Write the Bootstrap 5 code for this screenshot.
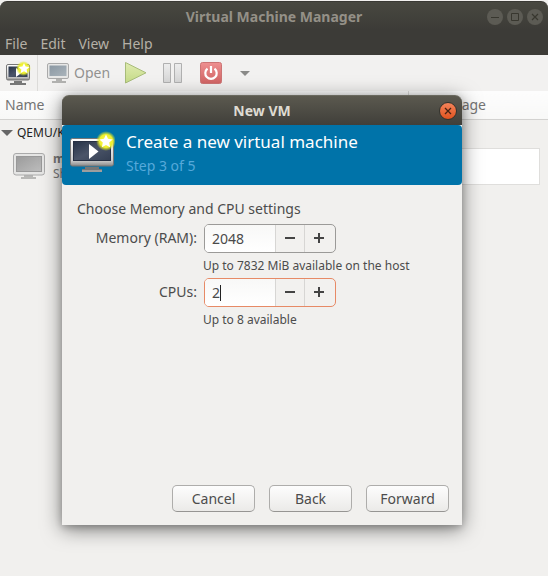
<!DOCTYPE html>
<html lang="en">
<head>
<meta charset="utf-8">
<meta name="viewport" content="width=device-width, initial-scale=1">
<title>Virtual Machine Manager</title>
<link href="https://cdn.jsdelivr.net/npm/bootstrap@5.3.0/dist/css/bootstrap.min.css" rel="stylesheet">
<style>
body{font-family:"Noto Sans","Open Sans",sans-serif;font-size:14px;line-height:20px;color:#4c4c4c;background:#f1f0ee}
svg{display:block;flex:none}
.vmm{min-height:100vh;overflow:hidden;padding-top:1px}
.chrome{background:linear-gradient(#484840,#3c3b37 28px);border-top:1px solid #3a3934;border-radius:7px 7px 0 0;color:#a7a298}
.titlebar{height:29px;padding-right:5px}
.titlebar h1{font-size:14px;line-height:28px;font-weight:700;margin:0;color:#949087;padding-left:61px}
.winctl{width:16px;height:16px;border-radius:50%;border:0;padding:0;background:#5c5b54}
.menus{height:24px;gap:13px;padding-left:5px}
.menus a{color:#b5b0a6;text-decoration:none;line-height:25px}
.tools{height:36px;background:#f2f1f0}
.tools button{border:0;background:none;padding:0;color:#929290}
.tools .act{padding-left:15px}
.sep{width:1px;height:36px;background:#dcdbd9}
.vms{width:100%;table-layout:fixed;border-collapse:collapse}
.vms th{height:28px;font-weight:400;color:#747474;background:linear-gradient(#fdfdfd,#f8f8f7);border-bottom:1px solid #d3d2d0;padding:0 5px}
.vms .use{width:140px;border-left:1px solid #dcdcda;padding-right:62px;text-align:right}
.vms .host{height:27px;color:#222;padding:0}
.host span{font-size:12px}
.vms .guest{height:40px;padding:0 0 0 12px;font-size:12px;line-height:15px;color:#777}
.vms .graphcell{padding:0 8px 0 12px}
.graph{height:37px;background:#fff;border:1px solid #dfdedc}
.dlg{position:absolute;left:62px;top:95px;width:400px;min-height:430px;background:#f1f0ee;border-radius:7px 7px 0 0;box-shadow:0 4px 20px rgba(0,0,0,.5),0 2px 7px rgba(0,0,0,.2)}
.dlghead{height:30px;background:linear-gradient(#5b594f,#403f3a);border-top:1px solid #6a695f;border-radius:7px 7px 0 0;padding-right:5px}
.dlghead h2{font-size:14px;line-height:28px;font-weight:700;margin:0;color:#dfdbd2;padding-left:23px}
.shut{width:18px;height:18px;border-radius:50%;border:1px solid #35332d;padding:0;background:linear-gradient(#f3835a,#e2531f)}
.banner{height:60px;background:#0073a9;border-radius:4px;padding:5px 0 0 7px;gap:11px}
.banner p{margin:0;font-size:17px;line-height:24px;color:#fff}
.banner small{display:block;font-size:14px;line-height:24px;color:#56a9da}
.setup{padding:14px 15px 0}
.fields{display:grid;grid-template-columns:120px 1fr;column-gap:7px;margin-top:5px}
.fields label{text-align:right;line-height:28px}
.spin{width:132px;height:29px;border:1px solid #9b9a98;border-radius:5px;background:#f2f1ef;overflow:hidden;position:relative}
.spin input{width:70px;border:0;padding:0 0 0 7px;outline:0;background:linear-gradient(#f8f8f7,#fff);color:#4a4a4a;caret-color:transparent}
.spin button{width:29px;border:0;border-left:1px solid #d7d6d4;padding:0;background:none}
.spin.hot{border-color:#e78a66}
.caret{position:absolute;left:15px;top:6px;width:1px;height:16px;background:#222}
.hint{font-size:12px;line-height:25px;grid-column:2;margin-left:-1px}
.acts{gap:14px;padding:0 13px 13px}
.acts .btn{width:83px;height:27px;font-size:14px;line-height:20px;padding:2px 0;border:1px solid #aeadab;border-bottom-color:#969593;border-radius:5px;color:#4c4c4c;background:linear-gradient(#fdfdfd,#ebeae8)}
</style>
<script src="https://cdn.jsdelivr.net/npm/bootstrap@5.3.0/dist/js/bootstrap.bundle.min.js"></script>
</head>
<body>
<svg width="0" height="0" class="position-absolute" aria-hidden="true">
<defs>
<linearGradient id="scr" x2="1" y2="1"><stop stop-color="#263247"/><stop offset=".5" stop-color="#4a5468"/><stop offset="1" stop-color="#343f53"/></linearGradient>
<linearGradient id="frm" x2="0" y2="1"><stop stop-color="#fff"/><stop offset=".8" stop-color="#ccc"/><stop offset="1" stop-color="#888"/></linearGradient>
<linearGradient id="gry" x2="1" y2="1"><stop stop-color="#9b9b9b"/><stop offset="1" stop-color="#bdbdbd"/></linearGradient>
<linearGradient id="blu" x2="1" y2="1"><stop stop-color="#8b98a3"/><stop offset="1" stop-color="#aab4bb"/></linearGradient>
<linearGradient id="bar" x2="0" y2="1"><stop stop-color="#ededed"/><stop offset="1" stop-color="#d5d5d5"/></linearGradient>
<linearGradient id="grn" x2="0" y2="1"><stop stop-color="#dfeab0"/><stop offset="1" stop-color="#c6dc88"/></linearGradient>
<linearGradient id="red" x2="0" y2="1"><stop stop-color="#ee9090"/><stop offset="1" stop-color="#d06464"/></linearGradient>
<radialGradient id="glow"><stop stop-color="#fffb60"/><stop offset=".65" stop-color="#eef02c"/><stop offset="1" stop-color="#dbe61e" stop-opacity="0"/></radialGradient>
</defs>
</svg>
<main class="vmm d-flex flex-column">
<header class="chrome">
<div class="titlebar d-flex align-items-center">
<h1 class="flex-grow-1 text-center">Virtual Machine Manager</h1>
<div class="d-flex gap-1">
<button class="winctl" aria-label="Minimize"><svg width="16" height="16" stroke="#38372f"><path d="M4 8.500h8"/></svg></button>
<button class="winctl" aria-label="Maximize"><svg width="16" height="16" fill="none" stroke="#38372f"><path d="M4.500 4.500h7v7h-7z"/></svg></button>
<button class="winctl" aria-label="Close"><svg width="16" height="16" stroke="#38372f" stroke-width="1.200"><path d="M5 5l6 6M11 5l-6 6"/></svg></button>
</div>
</div>
<nav class="menus d-flex"><a href="#">File</a><a href="#">Edit</a><a href="#">View</a><a href="#">Help</a></nav>
</header>
<div class="tools d-flex align-items-center">
<button class="ps-1" aria-label="New virtual machine"><svg width="33" height="28" viewBox="0 0 33 28">
<path d="M10 22h8v2h4v2H6v-2h4z" fill="#777"/><rect x="2.500" y="5.500" width="23" height="15.500" rx="1.500" fill="url(#frm)" stroke="#777"/><rect x="4.500" y="7.500" width="19" height="10.500" fill="url(#scr)"/><path d="M12 9l6 4.500-6 4.500z" fill="#fff"/><circle cx="19.500" cy="9.500" r="7.500" fill="url(#glow)"/><path d="M20 4l1.600 3.500 3.900.4-2.900 2.600.9 3.800-3.500-2-3.500 2 .9-3.800-2.900-2.600 3.900-.4z" fill="#fff"/></svg></button>
<div class="sep"></div>
<button class="d-flex align-items-center ps-2"><svg width="28" height="24" viewBox="0 0 28 24"><path d="M10 18h6v2h4v2H6v-2h4z" fill="#b2b2b0"/><rect x="1.500" y="2.500" width="21" height="15" rx="1.500" fill="#e7e7e6" stroke="#aaa"/><rect x="3.500" y="4.500" width="17" height="10.500" fill="url(#blu)"/></svg><span>Open</span></button>
<button class="act" aria-label="Run"><svg width="22" height="24"><path d="M.5 1.500v20.500l20.500-10.200z" fill="url(#grn)" stroke="#a8bc7a"/></svg></button>
<button class="act" aria-label="Pause"><svg width="22" height="24" fill="url(#bar)" stroke="#b0b0b0"><path d="M1.500 2.500h7v19h-7zM12.500 2.500h7v19h-7z"/></svg></button>
<button class="ps-3" aria-label="Shut down"><svg width="23" height="24" fill="none"><rect x=".5" y="1.500" width="21" height="21" rx="2" fill="url(#red)" stroke="#cc7474"/><path d="M7.500 7.700a5.700 5.700 0 1 0 7 0M11 5v7" stroke="#fff" stroke-width="2.200"/></svg></button>
<button class="ps-3" aria-label="Shut down options"><svg width="12" height="8"><path d="M1 2h10L6 7z" fill="#8a8a88"/></svg></button>
</div>
<table class="vms">
<thead><tr><th>Name</th><th class="use">CPU usage</th></tr></thead>
<tbody>
<tr><td class="host" colspan="2"><div class="d-flex align-items-center gap-1"><svg width="13" height="10"><path d="M1 2h12L7 8z" fill="#666"/></svg><span>QEMU/KVM</span></div></td></tr>
<tr><td class="guest"><div class="d-flex align-items-center gap-2"><svg width="33" height="28" viewBox="0 0 33 28"><path d="M12 23h9v2h3v2H9v-2h3z" fill="#b8b8b6"/><rect x="1.500" y="1.500" width="31" height="21.500" rx="2.500" fill="#e5e5e4" stroke="#aaa"/><rect x="4.500" y="4.500" width="25" height="15" fill="url(#gry)" stroke="#999"/></svg><div><b>m</b><br>Sh</div></div></td><td class="graphcell"><div class="graph"></div></td></tr>
</tbody>
</table>
</main>
<section class="dlg d-flex flex-column" role="dialog" aria-labelledby="dt">
<div class="dlghead d-flex align-items-center"><h2 id="dt" class="flex-grow-1 text-center">New VM</h2><button class="shut" aria-label="Close dialog"><svg width="16" height="16" stroke="#472313" stroke-width="1.300"><path d="M5 5l6 6M11 5l-6 6"/></svg></button></div>
<div class="banner d-flex">
<svg width="46" height="46" viewBox="0 0 46 46"><path d="M16 37h14v2h3v3H13v-3h3z" fill="#777"/><path d="M13 41h20" stroke="#c5c5c5"/><rect x="1.500" y="8.500" width="43" height="27.500" rx="2" fill="url(#frm)" stroke="#777"/><rect x="4.500" y="11.500" width="37" height="19" fill="url(#scr)" stroke="#273043"/><path d="M20 14l9.500 7.500-9.500 7.500z" fill="#fff"/><circle cx="37" cy="11" r="10" fill="url(#glow)"/><path d="M37 4.500l2 4.300 4.700.6-3.500 3.200.9 4.700-4.100-2.300-4.100 2.300.9-4.700-3.500-3.200 4.700-.6z" fill="#fff"/></svg>
<div><p>Create a new virtual machine</p><small>Step 3 of 5</small></div>
</div>
<form class="setup flex-grow-1">
<div>Choose Memory and CPU settings</div>
<div class="fields">
<label for="ram">Memory (RAM):</label>
<div class="spin d-flex"><input id="ram" value="2048"><button type="button" aria-label="Less memory"><svg width="28" height="27" stroke="#444" stroke-width="2"><path d="M9 13h10"/></svg></button><button type="button" aria-label="More memory"><svg width="28" height="27" stroke="#444" stroke-width="2"><path d="M9 13h10M14 8v10"/></svg></button></div>
<div class="hint">Up to 7832 MiB available on the host</div>
<label for="cpu">CPUs:</label>
<div class="spin hot d-flex"><input id="cpu" value="2"><span class="caret"></span><button type="button" aria-label="Fewer CPUs"><svg width="28" height="27" stroke="#444" stroke-width="2"><path d="M9 13h10"/></svg></button><button type="button" aria-label="More CPUs"><svg width="28" height="27" stroke="#444" stroke-width="2"><path d="M9 13h10M14 8v10"/></svg></button></div>
<div class="hint">Up to 8 available</div>
</div>
</form>
<div class="acts d-flex justify-content-end"><button class="btn">Cancel</button><button class="btn">Back</button><button class="btn">Forward</button></div>
</section>
</body>
</html>
